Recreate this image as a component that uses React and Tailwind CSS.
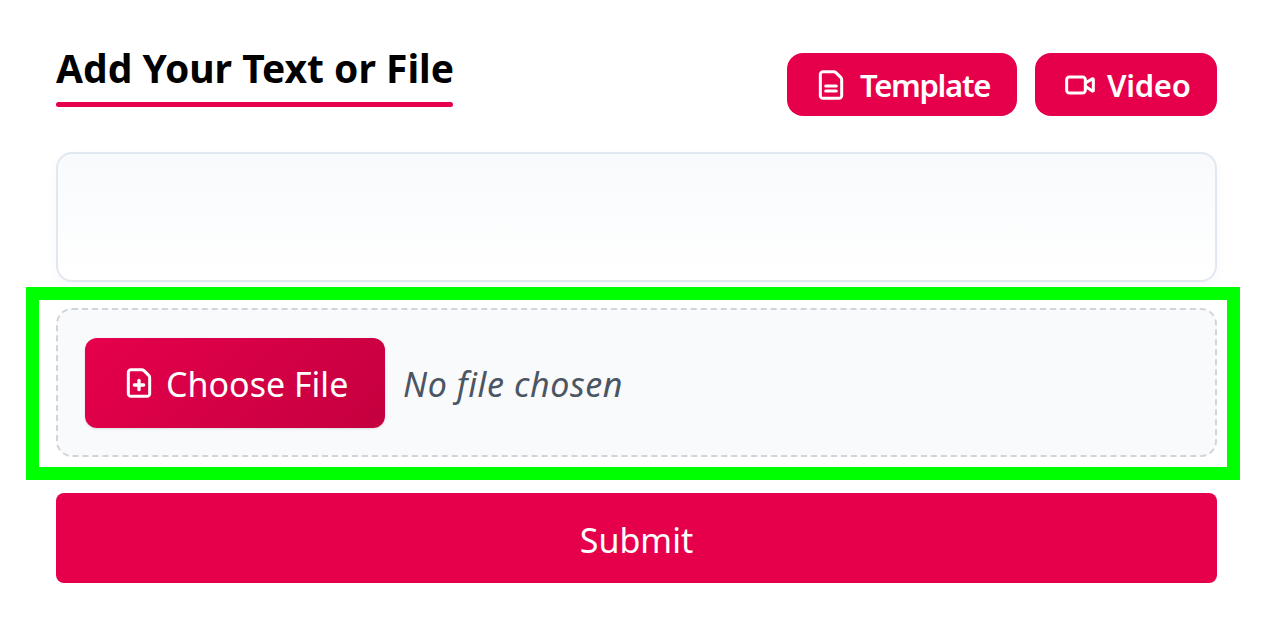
import React from 'react';
import { Video } from 'lucide-react';

const font = "font-['Noto_Sans',sans-serif]";

const FileIcon = ({ children, className }) => (
    <svg viewBox="0 0 24 24" fill="none" stroke="currentColor" strokeWidth="2.25" strokeLinecap="round" strokeLinejoin="round" className={className}>
        <path d="M6 22a2 2 0 0 1-2-2V4a2 2 0 0 1 2-2h8a2.4 2.4 0 0 1 1.706.706l3.588 3.588A2.4 2.4 0 0 1 20 8v12a2 2 0 0 1-2 2z" />
        {children}
    </svg>
);

const HeaderButton = ({ icon, label, className, labelClass }) => (
    <button type="button" className={`h-[63px] flex items-center rounded-[16px] bg-[#e6004c] text-white text-[31px] font-semibold ${className}`}>
        {icon}
        <span className={`pt-[2px] ${labelClass}`}>{label}</span>
    </button>
);

const App = () => {
    return (
        <div className={`w-[1280px] h-[637px] overflow-hidden bg-white pl-[26px] pr-[40px] ${font}`}>
            <div className="ml-[30px] mr-[23px] pt-[53px] flex justify-between items-start">
                <div className="flex flex-col w-[397px] -mt-[10px]">
                    <h1 className="text-[39px] leading-[50px] font-bold text-black whitespace-nowrap">Add Your Text or File</h1>
                    <div className="h-[5px] mt-[9px] rounded-full bg-[#e6004c]"></div>
                </div>
                <div className="flex gap-[18px]">
                    <HeaderButton
                        className="w-[230px] pl-[28px] gap-[13px]"
                        labelClass="tracking-[-1.3px]"
                        label="Template"
                        icon={
                            <FileIcon className="w-[32px] h-[32px]">
                                <path d="M8 12.75h8" />
                                <path d="M8 16.5h8" />
                            </FileIcon>
                        }
                    />
                    <HeaderButton
                        className="w-[182px] pl-[29px] gap-[11px]"
                        labelClass="tracking-[-0.3px]"
                        label="Video"
                        icon={<Video className="w-[32px] h-[32px]" strokeWidth={2.25} />}
                    />
                </div>
            </div>

            <div className="ml-[30px] mr-[23px] mt-[36px] h-[130px] rounded-[16px] border-2 border-[#e2e8f0] bg-gradient-to-b from-[#f8fafc] to-white shadow-[0_4px_12px_rgba(0,0,0,0.03)]"></div>

            <div className="mt-[5px] h-[193px] border-[13px] border-[#00ff00] pl-[17px] pr-[10px] pt-[8px] pb-[10px] bg-white">
                <div className="h-full rounded-[16px] border-2 border-dashed border-[#d1d5db] bg-[#f9fafb] pl-[27px] flex items-center">
                    <button type="button" className="w-[300px] h-[90px] rounded-[12px] bg-[linear-gradient(135deg,#e6004c,#c4003f)] text-white text-[34px] flex items-center pl-[38px] gap-[11px] shadow-sm">
                        <FileIcon className="w-[32px] h-[32px]">
                            <path d="M8.5 13.5h7" strokeWidth="2.5" />
                            <path d="M12 10v7" strokeWidth="2.5" />
                        </FileIcon>
                        <span className="pt-[4px]">Choose File</span>
                    </button>
                    <span className="ml-[18px] pt-[4px] text-[34px] italic text-[#4b5563] tracking-[0.6px]">No file chosen</span>
                </div>
            </div>

            <button type="button" className="block ml-[30px] mt-[13px] pt-[4px] w-[1161px] h-[90px] rounded-[8px] bg-[#e6004c] text-white text-[34px]">
                Submit
            </button>
        </div>
    );
};

export default App;
